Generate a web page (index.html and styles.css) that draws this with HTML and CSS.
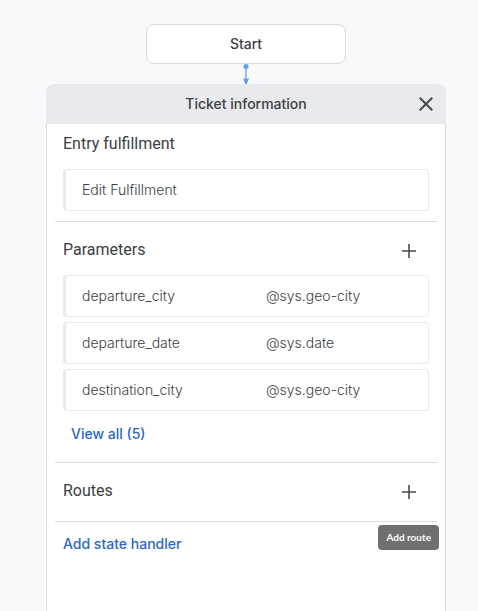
FILE: index.html
```html
<!DOCTYPE html>
<html lang="en">
<head>
<meta charset="utf-8">
<title>Ticket information</title>
<link rel="stylesheet" href="styles.css">
</head>
<body>
<main class="flow">
  <button class="start" type="button">Start</button>
  <svg class="connector" width="10" height="20" viewBox="0 0 10 20" aria-hidden="true">
    <path class="connector-line" d="M5 3v12"/>
    <circle cx="5" cy="2.5" r="2.5"/>
    <path d="M2 14.500h6L5.800 20H4.200z"/>
  </svg>
  <article class="panel">
    <header class="panel-header">
      <h1 class="panel-title">Ticket information</h1>
      <button class="icon-button" type="button" aria-label="Close">
        <svg width="24" height="24" viewBox="0 0 24 24" aria-hidden="true"><path d="M19 6.410L17.590 5 12 10.590 6.410 5 5 6.410 10.590 12 5 17.590 6.410 19 12 13.410 17.590 19 19 17.590 13.410 12z"/></svg>
      </button>
    </header>
    <div class="panel-body">
      <section class="section section-first">
        <div class="section-head"><h2 class="section-title">Entry fulfillment</h2></div>
        <button class="card" type="button">Edit Fulfillment</button>
      </section>
      <section class="section">
        <div class="section-head">
          <h2 class="section-title" id="parameters">Parameters</h2>
          <button class="icon-button" type="button" aria-label="Add parameter">
            <svg width="24" height="24" viewBox="0 0 24 24" aria-hidden="true"><path d="M19 12.800h-6.200V19h-1.600v-6.200H5v-1.600h6.200V5h1.600v6.200H19z"/></svg>
          </button>
        </div>
        <table class="parameters" aria-labelledby="parameters">
          <tbody>
            <tr><th scope="row">departure_city</th><td>@sys.geo-city</td></tr>
            <tr><th scope="row">departure_date</th><td>@sys.date</td></tr>
            <tr><th scope="row">destination_city</th><td>@sys.geo-city</td></tr>
          </tbody>
        </table>
        <button class="text-button view-all" type="button">View all (5)</button>
      </section>
      <section class="section">
        <div class="section-head">
          <h2 class="section-title">Routes</h2>
          <button class="icon-button" type="button" aria-describedby="route-tip" aria-label="Add route">
            <svg width="24" height="24" viewBox="0 0 24 24" aria-hidden="true"><path d="M19 12.800h-6.200V19h-1.600v-6.200H5v-1.600h6.200V5h1.600v6.200H19z"/></svg>
          </button>
          <span class="tooltip" id="route-tip" role="tooltip">Add route</span>
        </div>
      </section>
      <button class="text-button add-handler" type="button">Add state handler</button>
    </div>
  </article>
</main>
</body>
</html>
```
FILE: styles.css
```css
* {
  box-sizing: border-box;
}

body {
  margin: 0;
  background: #f8f9fb;
  color: #3c4043;
  font: 14px/20px Inter, Roboto, sans-serif;
}

button {
  margin: 0;
  padding: 0;
  border: 0;
  background: none;
  color: inherit;
  font: inherit;
  cursor: pointer;
}

.flow {
  display: flex;
  flex-direction: column;
  align-items: center;
  min-height: 100vh;
  padding: 24px 32px 0 46px;
}

.start {
  width: 50%;
  height: 40px;
  border: 1px solid #dadce0;
  border-radius: 8px;
  background: #fff;
  font-weight: 500;
}

.connector {
  display: block;
  fill: #6c9cec;
}

.connector-line {
  stroke: #9dbdf2;
  stroke-width: 2;
}

.panel {
  display: flex;
  flex: 1;
  flex-direction: column;
  width: 100%;
}

.panel-header {
  display: grid;
  grid-template-columns: 40px 1fr 40px;
  align-items: center;
  height: 40px;
  border-radius: 8px 8px 0 0;
  background: #e8eaed;
}

.panel-title {
  grid-column: 2;
  margin: 0;
  font-size: 14px;
  font-weight: 500;
  text-align: center;
}

.panel-body {
  flex: 1;
  padding: 0 8px;
  border: 1px solid #dadce0;
  border-width: 0 1px;
  background: #fff;
}

.section {
  padding: 10px 8px;
  border-bottom: 1px solid #dadce0;
}

.section-first {
  padding-top: 2px;
}

.section-head {
  position: relative;
  display: flex;
  align-items: center;
  justify-content: space-between;
  height: 38px;
}

.section-title {
  margin: 0;
  padding-bottom: 2px;
  font: 400 16px/20px Roboto, sans-serif;
}

.icon-button {
  display: grid;
  place-items: center;
  width: 40px;
  height: 40px;
}

.icon-button svg {
  fill: #444b50;
}

.card {
  display: block;
  width: 100%;
  height: 42px;
  margin-top: 5px;
  padding: 0 16px;
  border: 1px solid #e8eaed;
  border-left-width: 3px;
  border-radius: 4px;
  font-weight: 300;
  text-align: left;
}

.parameters {
  width: 100%;
  border-spacing: 0 5px;
  table-layout: fixed;
}

.parameters th,
.parameters td {
  height: 42px;
  padding: 0 0 0 16px;
  border: 1px solid #e8eaed;
  font-weight: 300;
  text-align: left;
}

.parameters th {
  border-right: 0;
  border-left-width: 3px;
  border-radius: 4px 0 0 4px;
}

.parameters td {
  padding-left: 20px;
  border-left: 0;
  border-radius: 0 4px 4px 0;
}

.text-button {
  display: block;
  color: #2a66cc;
  font-weight: 500;
}

.view-all {
  height: 36px;
  padding: 0 8px;
}

.add-handler {
  height: 44px;
  padding: 0 8px;
}

.tooltip {
  position: absolute;
  top: 52px;
  right: -10px;
  padding: 4px 8px;
  border-radius: 4px;
  background: #707070;
  color: #fff;
  font: 700 10px/17px Lato, Roboto, sans-serif;
  white-space: nowrap;
}
```
